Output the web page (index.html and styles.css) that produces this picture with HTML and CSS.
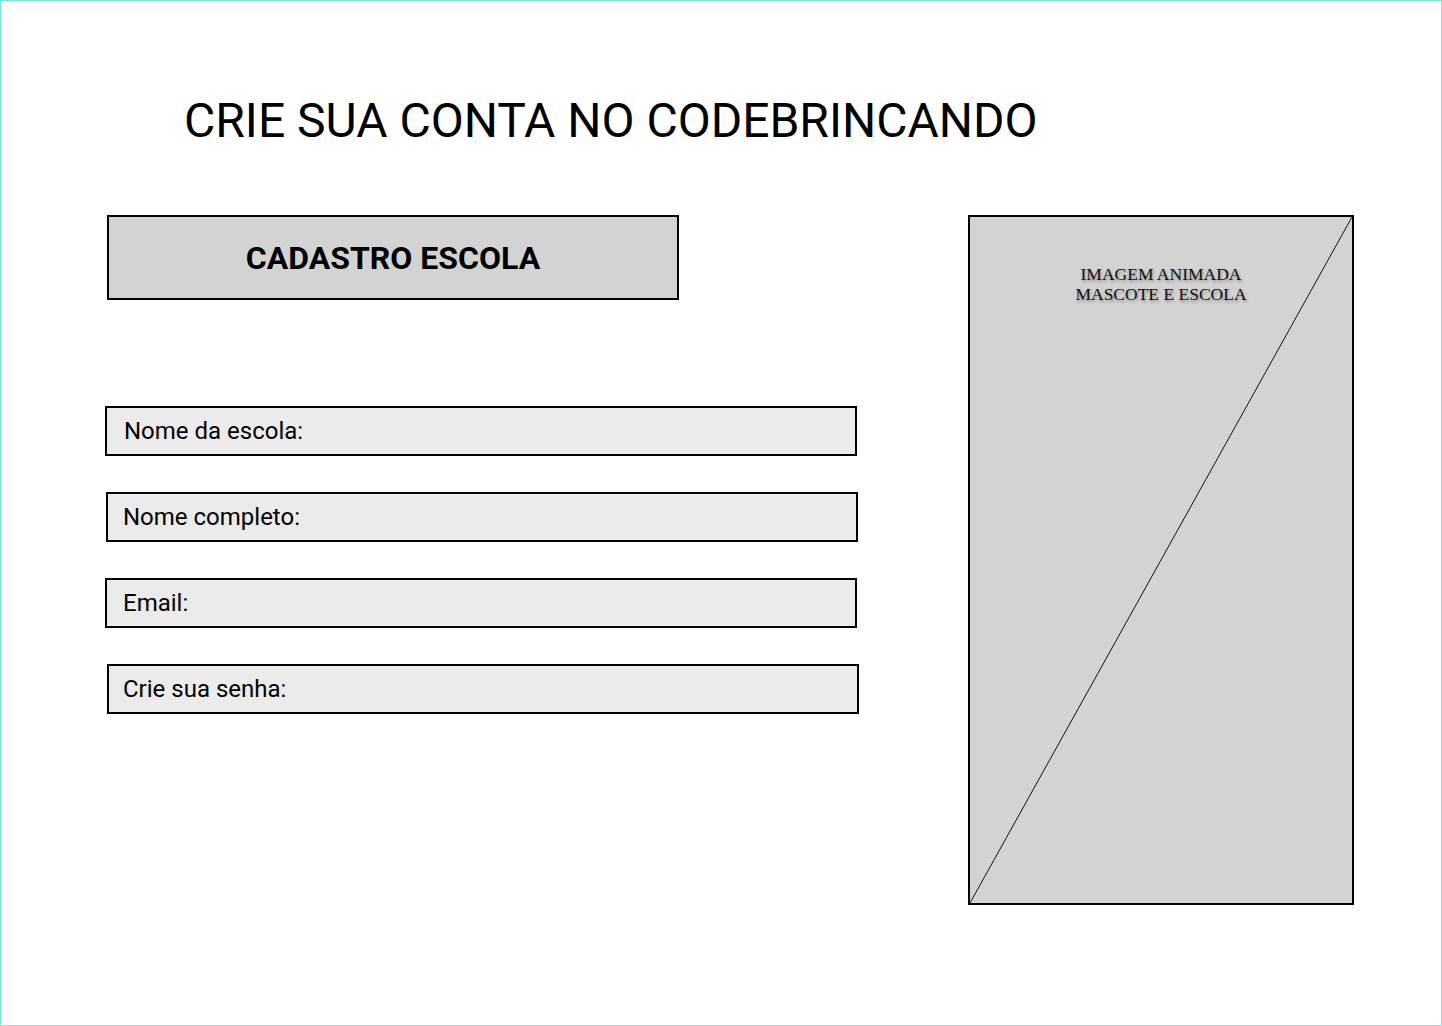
FILE: index.html
```html
<!DOCTYPE html>
<html lang="pt-BR">
<head>
    <meta charset="UTF-8">
    <meta name="viewport" content="width=device-width, initial-scale=1.0">
    <title>Cadastro Escola - CodeBrincando</title>
    <link rel="stylesheet" href="styles.css">
</head>
<body>
    <div class="frame">
        <h1 class="page-title">CRIE SUA CONTA NO CODEBRINCANDO</h1>

        <div class="content">
            <div class="form-side">
                <div class="form-heading">CADASTRO ESCOLA</div>

                <form class="signup-form" action="#" method="POST">
                    <label class="field">Nome da escola:</label>
                    <label class="field field-b">Nome completo:</label>
                    <label class="field field-c">Email:</label>
                    <label class="field field-d">Crie sua senha:</label>
                </form>
            </div>

            <div class="mascot-box">
                <svg class="mascot-cross" viewBox="0 0 382 686" preserveAspectRatio="none">
                    <line x1="382" y1="0" x2="0" y2="686" stroke="#111" stroke-width="1"/>
                </svg>
                <p class="mascot-text">IMAGEM ANIMADA<br>MASCOTE E ESCOLA</p>
            </div>
        </div>
    </div>
</body>
</html>
```

FILE: styles.css
```css
body {
    margin: 0;
    padding: 0;
    background: #ffffff;
    font-family: Roboto, 'Liberation Sans', sans-serif;
    color: #000;
}

.frame {
    width: 1442px;
    height: 1026px;
    box-sizing: border-box;
    border: 1px solid #7de6d6;
    padding: 92px 0 0 0;
}

.page-title {
    margin: 0 0 66px 183px;
    font-size: 48px;
    font-weight: 400;
    line-height: 56px;
}

.content {
    display: flex;
    align-items: flex-start;
    padding-left: 104px;
    gap: 109px;
}

.form-side {
    width: 754px;
}

.form-heading {
    width: 568px;
    height: 81px;
    margin-left: 2px;
    background: #d3d3d3;
    border: 2px solid #000;
    display: flex;
    align-items: center;
    justify-content: center;
    font-size: 32px;
    font-weight: 700;
}

.signup-form {
    margin-top: 106px;
    display: flex;
    flex-direction: column;
    gap: 36px;
}

.field {
    display: flex;
    align-items: center;
    box-sizing: border-box;
    width: 752px;
    height: 50px;
    padding-left: 17px;
    background: #ebebeb;
    border: 2px solid #000;
    font-size: 24px;
}

.field-b {
    margin-left: 1px;
    padding-left: 15px;
}

.field-c {
    padding-left: 16px;
}

.field-d {
    margin-left: 2px;
    padding-left: 14px;
}

.mascot-box {
    position: relative;
    width: 382px;
    height: 686px;
    background: #d3d3d3;
    border: 2px solid #000;
}

.mascot-cross {
    position: absolute;
    top: 0;
    left: 0;
    width: 100%;
    height: 100%;
}

.mascot-text {
    position: relative;
    margin: 47px 0 0 0;
    text-align: center;
    font-family: 'Liberation Serif', serif;
    font-size: 17.5px;
    line-height: 20px;
    color: #111;
    text-shadow: 1px 2px 3px rgba(0, 0, 0, 0.35);
}
```
